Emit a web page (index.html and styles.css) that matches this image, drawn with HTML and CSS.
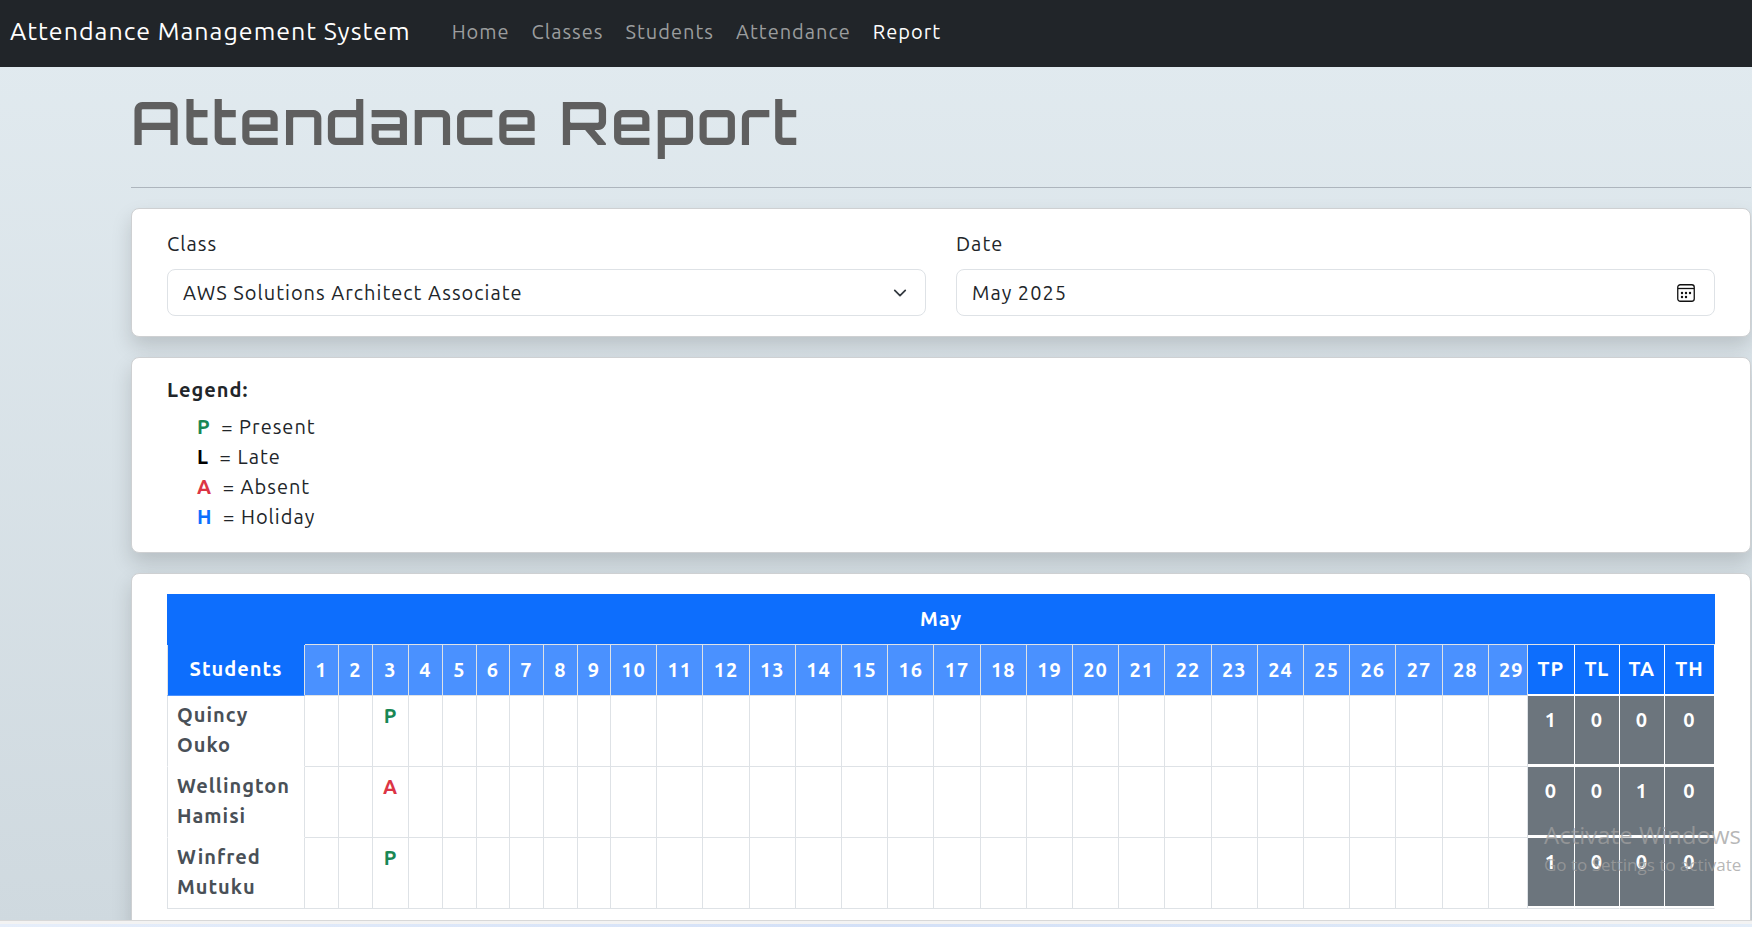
FILE: index.html
```html
<!DOCTYPE html>
<html lang="en">
<head>
  <meta charset="UTF-8" />
  <meta name="viewport" content="width=device-width, initial-scale=1" />
  <title>Attendance Report</title>
  <link rel="stylesheet" href="styles.css">
</head>
<body>

  <nav class="navbar">
    <a class="brand" href="#">Attendance Management System</a>
    <a class="nav-link" href="#">Home</a>
    <a class="nav-link" href="#">Classes</a>
    <a class="nav-link" href="#">Students</a>
    <a class="nav-link" href="#">Attendance</a>
    <a class="nav-link active" href="#">Report</a>
  </nav>

  <main class="page">
    <h1>Attendance Report</h1>
    <hr />

    <form class="card filters">
      <div class="field">
        <label for="classSelect">Class</label>
        <select id="classSelect" class="control select">
          <option>AWS Solutions Architect Associate</option>
        </select>
      </div>
      <div class="field">
        <label for="monthInput">Date</label>
        <div class="month-picker">
          <input type="text" id="monthInput" class="control" value="May 2025" />
          <svg class="calendar-icon" viewBox="0 0 18 18" aria-hidden="true">
            <rect x="0.75" y="0.75" width="16.5" height="16.5" rx="2.5" fill="none" stroke="#111" stroke-width="1.3" />
            <path d="M1 4.5h16" stroke="#111" stroke-width="1.3" />
            <g fill="#111">
              <circle cx="5" cy="9" r="1.2" />
              <circle cx="9" cy="9" r="1.2" />
              <circle cx="13" cy="9" r="1.2" />
              <circle cx="5" cy="13" r="1.2" />
              <circle cx="9" cy="13" r="1.2" />
            </g>
          </svg>
        </div>
      </div>
    </form>

    <section class="card">
      <h2 class="legend-title">Legend:</h2>
      <ul class="legend">
        <li><b class="present">P</b> = Present</li>
        <li><b class="late">L</b> = Late</li>
        <li><b class="absent">A</b> = Absent</li>
        <li><b class="holiday">H</b> = Holiday</li>
      </ul>
    </section>

    <section class="card">
      <table class="report">
        <colgroup>
          <col class="col-name" />
          <col class="col-day" span="2" />
          <col class="col-mark" />
          <col class="col-day" span="2" />
          <col class="col-narrow" />
          <col class="col-day" span="2" />
          <col class="col-narrow" />
          <col span="19" />
          <col class="col-last" />
          <col class="col-tp" />
          <col class="col-total" span="2" />
          <col class="col-end" />
        </colgroup>
        <thead>
          <tr class="month"><th colspan="34">May</th></tr>
          <tr class="days" id="dayRow">
            <th class="students">Students</th>
          </tr>
        </thead>
        <tbody id="reportBody"></tbody>
      </table>
    </section>
  </main>

  <div class="taskbar-edge"></div>

  <!-- Windows activation notice -->
  <div class="watermark">
    <div class="watermark-title">Activate Windows</div>
    <div class="watermark-text">Go to Settings to activate</div>
  </div>

  <script src="script.js"></script>
</body>
</html>
```

FILE: styles.css
```css
* {
  box-sizing: border-box;
}

body {
  margin: 0;
  height: 100vh;
  display: flex;
  flex-direction: column;
  overflow: hidden;
  position: relative;
  font-family: Ubuntu, "Open Sans", sans-serif;
  font-size: 20px;
  line-height: 30px;
  letter-spacing: 1px;
  color: #212529;
  background: linear-gradient(#e2ebf0, #cfd9df);
}

/* Navbar */
.navbar {
  background-color: #212529;
  display: flex;
  align-items: center;
  flex-shrink: 0;
  height: 67px;
  padding: 0 10px 3px;
}

.brand {
  color: #fff;
  font-size: 25px;
  text-decoration: none;
  margin-right: 30px;
  padding-bottom: 2px;
}

.nav-link {
  color: #9b9d9e;
  text-decoration: none;
  padding: 10px 11px;
}

.nav-link.active {
  color: #fff;
}

.page {
  flex: 1;
  min-height: 0;
  overflow: hidden;
  padding: 20px 1px 0 131px;
}

h1 {
  margin: 0;
  font-family: Orbitron, "DejaVu Sans", sans-serif;
  font-size: 60px;
  font-weight: 600;
  line-height: 70px;
  letter-spacing: 2px;
  color: #5f5f5f;
}

hr {
  margin: 30px 0 20px;
  border: 0;
  border-top: 1px solid #adb5bd;
}

/* Cards */
.card {
  background-color: #fff;
  border: 1px solid #ced0d2;
  border-radius: 8px;
  box-shadow: 0 10px 20px rgba(0, 0, 0, 0.15);
  padding: 20px 35px;
  margin-bottom: 20px;
}

.filters {
  display: flex;
  gap: 30px;
}

.field {
  flex: 1;
}

.field label {
  display: block;
  margin-bottom: 10px;
}

.control {
  display: block;
  width: 100%;
  height: 47px;
  padding: 7px 15px;
  border: 1px solid #dee2e6;
  border-radius: 8px;
  background-color: #fff;
  color: #212529;
  font: inherit;
  letter-spacing: inherit;
}

.select {
  appearance: none;
  background-image: url("data:image/svg+xml,%3csvg xmlns='http://www.w3.org/2000/svg' viewBox='0 0 16 16'%3e%3cpath fill='none' stroke='%23343a40' stroke-linecap='round' stroke-linejoin='round' stroke-width='2' d='m2 5 6 6 6-6'/%3e%3c/svg%3e");
  background-repeat: no-repeat;
  background-position: right 16px center;
  background-size: 18px 14px;
}

.month-picker {
  position: relative;
}

.calendar-icon {
  position: absolute;
  top: 15px;
  right: 20px;
  width: 18px;
  height: 18px;
}

/* Legend */
.legend-title {
  margin: 0 0 10px;
  font-size: 20px;
  line-height: 24px;
}

.legend {
  list-style: none;
  margin: 0;
  padding: 0 0 0 30px;
}

.legend b {
  margin-right: 5px;
}

.present {
  color: #198754;
}

.late {
  color: #000;
}

.absent {
  color: #dc3545;
}

.holiday {
  color: #0d6efd;
}

/* Report table */
.report {
  width: 100%;
  table-layout: fixed;
  border-collapse: separate;
  border-spacing: 0;
}

.col-name { width: 138px; }
.col-day { width: 34px; }
.col-narrow { width: 33px; }
.col-mark { width: 36px; }
.col-last { width: 39px; }
.col-tp { width: 47px; }
.col-total { width: 45px; }
.col-end { width: 50px; }

.report th,
.report td {
  padding: 5px 0;
  text-align: center;
  vertical-align: top;
  border-right: 1px solid #dee2e6;
  border-bottom: 1px solid #dee2e6;
  font-weight: bold;
}

.report .month th {
  height: 51px;
  padding: 10px 0;
  background-color: #0d6efd;
  color: #fff;
  border-right: 0;
}

.report .days th {
  height: 51px;
  padding: 10px 0;
  background-color: #4a91ff;
  color: #fff;
}

.report .days .students {
  padding-top: 9px;
  background-color: #0d6efd;
  border-bottom-color: #4a91ff;
  border-left: 1px solid #dee2e6;
  box-shadow: 0 -1px #0d6efd;
}

.report .days .last-day {
  padding-left: 10px;
  text-align: left;
}

.report .days .total-head {
  padding-top: 9px;
  background-color: #0d6efd;
  border-color: #fff;
  box-shadow: inset 0 -1px #fff;
}

.report .name {
  height: 71px;
  padding: 4px 0 6px 9px;
  text-align: left;
  color: #495057;
  border-left: 1px solid #dee2e6;
  border-bottom-color: #fff;
}

.report .total {
  padding-top: 9px;
  background-color: #6c757d;
  color: #fff;
  border-color: #fff;
  box-shadow: inset 0 -2px #fff;
}

.report tbody tr:last-child .name,
.report tbody tr:last-child .total {
  border-bottom-color: #dee2e6;
}

.taskbar-edge {
  flex-shrink: 0;
  height: 7px;
  background: linear-gradient(90deg, #e6eefa, #d3e0f7, #e3edf8);
  border-top: 1px solid #d8d8d8;
  box-shadow: inset 0 3px #f3f3f3;
}

.watermark {
  position: absolute;
  left: calc(100% - 208px);
  bottom: 47px;
  white-space: nowrap;
  letter-spacing: 0;
  color: rgba(160, 160, 160, 0.75);
  font-family: "Segoe UI", "Open Sans", sans-serif;
  pointer-events: none;
}

.watermark-title {
  font-size: 24px;
}

.watermark-text {
  font-size: 17px;
}
```

FILE: script.js
```js
const DAYS = 29;

const students = [
  { name: "Quincy Ouko", marks: { 3: "P" }, totals: [1, 0, 0, 0] },
  { name: "Wellington Hamisi", marks: { 3: "A" }, totals: [0, 0, 1, 0] },
  { name: "Winfred Mutuku", marks: { 3: "P" }, totals: [1, 0, 0, 0] },
];

const markClass = { P: "present", L: "late", A: "absent", H: "holiday" };

function addCell(row, tag, text, className) {
  const cell = document.createElement(tag);
  cell.textContent = text;
  if (className) cell.className = className;
  row.appendChild(cell);
}

const dayRow = document.getElementById("dayRow");
for (let day = 1; day <= DAYS; day++) {
  addCell(dayRow, "th", day, day === DAYS ? "last-day" : "");
}
["TP", "TL", "TA", "TH"].forEach(label => addCell(dayRow, "th", label, "total-head"));

const body = document.getElementById("reportBody");
students.forEach(student => {
  const row = document.createElement("tr");
  addCell(row, "th", student.name, "name");
  for (let day = 1; day <= DAYS; day++) {
    const mark = student.marks[day] || "";
    addCell(row, "td", mark, markClass[mark]);
  }
  student.totals.forEach(total => addCell(row, "td", total, "total"));
  body.appendChild(row);
});
```
